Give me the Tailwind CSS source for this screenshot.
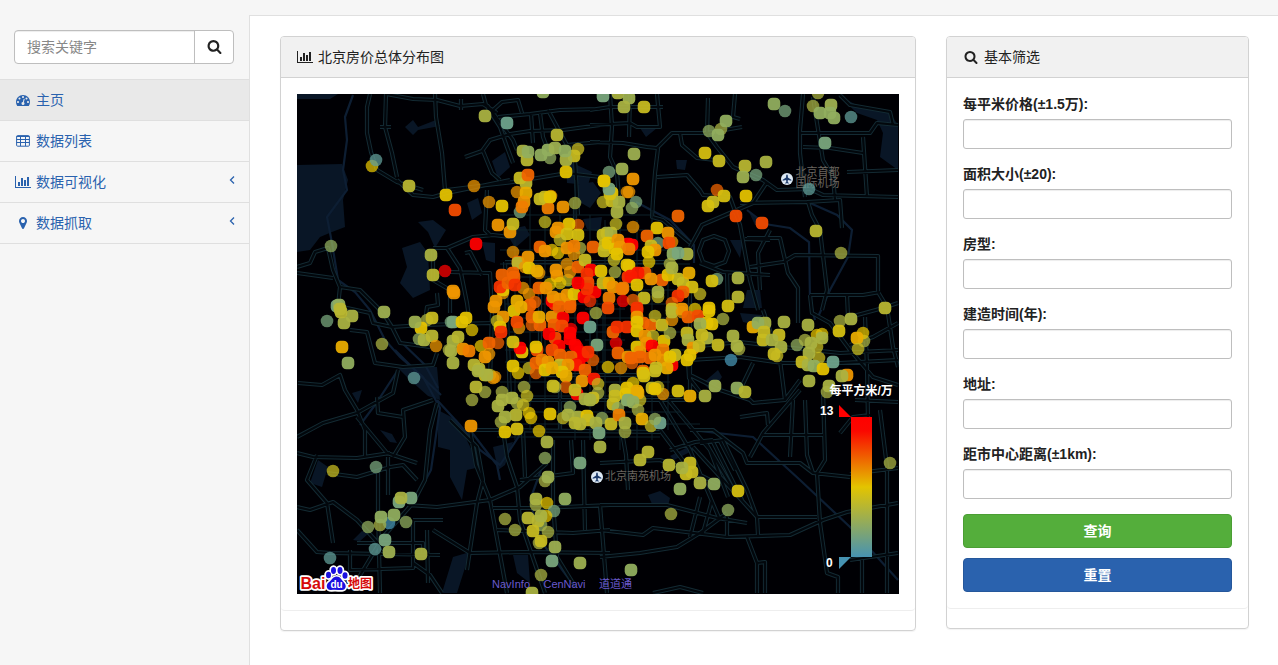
<!DOCTYPE html>
<html lang="zh-CN">
<head>
<meta charset="utf-8">
<title>北京房价总体分布图</title>
<script src="https://cdn.jsdelivr.net/npm/@tailwindcss/browser@4"></script>
</head>
<body class="bg-[#f6f6f6] text-[#222] text-sm leading-5 font-['Liberation_Sans','Noto_Sans_CJK_SC',sans-serif] h-[665px] overflow-hidden flex flex-col">
<svg class="hidden">
  <symbol id="search" viewBox="0 0 1792 1792"><path d="M1216 832q0-185-131.5-316.5t-316.5-131.5-316.5 131.5-131.5 316.5 131.5 316.5 316.5 131.5 316.5-131.5 131.5-316.5zm512 832q0 52-38 90t-90 38q-54 0-90-38l-343-342q-179 124-399 124-143 0-273.5-55.5t-225-150-150-225-55.5-273.5 55.5-273.5 150-225 225-150 273.5-55.5 273.5 55.5 225 150 150 225 55.5 273.5q0 220-124 399l343 343q37 37 37 90z"/></symbol>
  <symbol id="bars" viewBox="0 0 2048 1792"><path d="M640 896v512h-256v-512h256zm384-512v1024h-256v-1024h256zm1024 1152v128h-2048v-1536h128v1408h1920zm-640-896v768h-256v-768h256zm384-384v1152h-256v-1152h256z"/></symbol>
</svg>
<div class="h-[15px] shrink-0"></div>
<div class="flex flex-1 min-h-0">
  <aside class="w-[249px] shrink-0">
    <div class="pl-[14px] pr-[15px] pt-[15px] pb-[15px]">
      <div class="flex h-[34px] rounded border border-[#bebebe] bg-white overflow-hidden">
        <div class="flex-1 px-3 flex items-center text-[#888] shadow-[inset_0_1px_1px_rgba(0,0,0,0.075)]">搜索关键字</div>
        <div class="w-[39px] border-l border-[#bebebe] flex items-center justify-center pb-0.5"><svg class="size-[15px] fill-[#222]"><use href="#search"/></svg></div>
      </div>
    </div>
    <nav class="text-[#2a62ae]">
      <a class="flex items-center h-[41px] gap-1 pl-[14px] bg-[#e9e9e9] border-t border-[#dfdfdf]">
        <span class="w-[18px] flex justify-center"><svg class="size-[14px] fill-current" viewBox="0 0 1792 1792"><path d="M384 1152q0-53-37.500-90.500t-90.500-37.500-90.500 37.500-37.500 90.500 37.500 90.500 90.500 37.500 90.500-37.500 37.500-90.500zm192-448q0-53-37.500-90.500t-90.500-37.500-90.500 37.500-37.500 90.500 37.500 90.500 90.500 37.500 90.500-37.500 37.500-90.500zm428 481l101-382q6-26-7.500-48.500t-38.500-29.500-48 6.500-30 39.500l-101 382q-60 5-107 43.500t-63 98.500q-20 77 20 146t117 89 146-20 89-117q16-60-6-117t-72-91zm660-33q0-53-37.500-90.500t-90.500-37.500-90.500 37.500-37.500 90.500 37.500 90.500 90.500 37.500 90.500-37.500 37.500-90.500zm-640-640q0-53-37.500-90.500t-90.500-37.500-90.500 37.500-37.500 90.500 37.500 90.500 90.500 37.500 90.500-37.500 37.500-90.500zm448 192q0-53-37.500-90.500t-90.500-37.500-90.500 37.500-37.500 90.500 37.500 90.500 90.500 37.500 90.500-37.500 37.500-90.500zm320 448q0 261-141 483-19 29-54 29h-1402q-35 0-54-29-141-221-141-483 0-182 71-348t191-286 286-191 348-71 348 71 286 191 191 286 71 348z"/></svg></span>
        <span>主页</span>
      </a>
      <a class="flex items-center h-[41px] gap-1 pl-[14px] border-t border-[#dfdfdf]">
        <span class="w-[18px] flex justify-center"><svg class="w-[14px] h-[12px] fill-none stroke-current" viewBox="0 0 14 12"><rect x=".6" y=".6" width="12.800" height="10.600" rx="1"/><path d="M.5 1.500h13M.5 4.500h13M.5 7.500h13M4.500 1v10M9.500 1v10"/></svg></span>
        <span>数据列表</span>
      </a>
      <a class="flex items-center h-[41px] gap-1 pl-[14px] pr-[14px] border-t border-[#dfdfdf]">
        <span class="w-[18px] flex justify-center"><svg class="w-4 h-[14px] fill-current"><use href="#bars"/></svg></span>
        <span>数据可视化</span>
        <svg class="ml-auto mb-1 w-[6px] h-2 fill-none stroke-current stroke-[1.3]" viewBox="0 0 6 8"><path d="M5 .5 1.500 4 5 7.500"/></svg>
      </a>
      <a class="flex items-center h-[42px] gap-1 pl-[14px] pr-[14px] border-y border-[#dfdfdf]">
        <span class="w-[18px] flex justify-center"><svg class="w-2 h-[14px] fill-current" viewBox="0 0 1024 1792"><path d="M768 640q0-106-75-181t-181-75-181 75-75 181 75 181 181 75 181-75 75-181zm256 0q0 109-33 179l-364 774q-16 33-47.500 52t-67.500 19-67.500-19-46.500-52l-365-774q-33-70-33-179 0-212 150-362t362-150 362 150 150 362z"/></svg></span>
        <span>数据抓取</span>
        <svg class="ml-auto mb-1 w-[6px] h-2 fill-none stroke-current stroke-[1.3]" viewBox="0 0 6 8"><path d="M5 .5 1.500 4 5 7.500"/></svg>
      </a>
    </nav>
  </aside>
  <main class="flex-1 bg-white border-l border-t border-[#e0e0e0] pl-[30px] pt-5 flex items-start gap-[30px]">
    <section class="w-[636px] h-[595px] rounded border border-[#d2d2d2] shadow-[0_1px_1px_rgba(0,0,0,0.05)]">
      <div class="h-[41px] flex items-center gap-1 pl-[15px] bg-[#f1f1f1] border-b border-[#d2d2d2] rounded-t-[3px]">
        <span class="w-[18px] flex justify-center"><svg class="w-4 h-[14px] fill-[#222]"><use href="#bars"/></svg></span>
        <span>北京房价总体分布图</span>
      </div>
      <div class="h-[533px] px-4 pt-4 border-b border-[#eee] rounded-b">
        <svg class="block w-[602px] h-[500px] bg-[#000004]" viewBox="297 94 602 500">
          <defs>
            <linearGradient id="scale" x1="0" y1="0" x2="0" y2="1"><stop offset="0" stop-color="#ff0000"/><stop offset=".1" stop-color="#fa0800"/><stop offset=".5" stop-color="#e3c400"/><stop offset="1" stop-color="#4693b2"/></linearGradient>
            <symbol id="plane" viewBox="-7 -7 14 14"><circle r="6" fill="#dce8f4"/><path d="M0-4.500c.8 0 .9 1 .9 3L4.300.8v1L.9.9.7 3l1.200 1v.6L0 4.200l-1.900.4V4l1.200-1L-.9.9l-3.400.9v-1L-.9-1.500c0-2 .1-3 .9-3z" fill="#1d3a6b"/></symbol>
          </defs>
          <g fill="#091626">
            <path d="M297 165 342 164 348 180 343 200 345 227 332 232 320 237 310 250 297 252ZM297 94 338 94 330 99 297 99ZM405 127 413 120 418 127 436 120 440 126 418 130 413 135ZM418 222 433 220 446 230 435 248 428 232ZM402 248 420 242 428 253 430 290 413 298 400 283 407 267ZM397 367 437 367 440 400 428 396 410 380ZM467 203 478 198 482 213 472 220ZM482 242 495 243 495 263 486 260ZM838 95 857 113 877 120 883 133 880 157 898 170 898 125 890 113 862 108ZM640 128 657 128 646 137ZM676 160 687 160 685 170 677 169ZM730 240 743 240 740 258ZM747 290 760 290 762 308 743 308ZM748 210 768 227 755 225ZM438 410 457 420 480 467 467 470 462 500 450 477 450 450 438 447ZM453 557 470 552 457 593 442 593ZM318 460 328 467 322 487 310 483ZM352 393 362 390 358 403ZM380 430 392 434 397 443 390 442ZM353 540 362 531 368 534 360 541ZM513 555 528 555 530 583 517 573ZM493 447 513 442 505 465 498 470ZM574 185 593 182 601 193 590 208 576 200ZM583 219 602 217 600 232 587 229ZM505 230 525 226 530 235 515 248ZM648 495 660 491 670 498 668 506 652 504ZM670 456 690 446 694 450 674 460ZM703 383 718 370 722 377 712 392ZM492 161 505 152 510 167 498 178ZM566 160 592 172 588 185 567 183ZM740 313 762 315 760 326 743 322Z"/>
          </g>
          <g fill="none" stroke="#0d1e33" stroke-width="2.200">
            <path d="M353 95 345 117 347 140 343 170 347 190 327 217 332 243 338 280 355 292 370 310 385 340 400 357 423 377 440 408 431 470 413 503 383 537 353 587M810 203 837 215 852 230 848 257 830 290 818 317M747 210 765 224 790 228 809 242 810 300 815 320M690 430 753 437 800 480 850 527 898 580M636 202 670 220 694 245 694 263M398 370 375 405 360 425M437 400 460 425 480 450 500 465 523 430M541 470 530 500 540 540 575 587M395 350 420 375 441 395M399 340 425 365 438 388M470 430 483 447 497 465 500 480"/>
          </g>
          <g id="roads" fill="none"></g>
          <g fill="none" stroke="#0d2029" stroke-width="1">
            <path d="M505 290H700M505 304H700M505 318H700M510 332H690M505 350H690M505 362H680M500 382H670M500 396H690M500 412H680M495 424H700M497 437H660M515 240V440M530 180V430M545 200V440M560 215V430M575 180V440M590 215V440M605 220V440M620 210V450M637 220V450M652 210V440M668 240V430M500 250H680M500 264H690M500 277H690M500 215H650M500 230H660M590 300V370M597 300V370M603 300V370M585 309H625M585 325H625M585 340H625"/>
          </g>
          <g font-size="11" fill="#6a655f" font-family="'Liberation Sans','Noto Sans CJK SC',sans-serif">
            <text x="795.500" y="176">北京首都</text><text x="795.500" y="187">国际机场</text><text x="605" y="480">北京南苑机场</text>
          </g>
          <use href="#plane" x="780" y="172" width="14" height="14"/><use href="#plane" x="590" y="470" width="14" height="14"/>
          <g font-size="11" fill="#6a5acd" font-family="'Liberation Sans','Noto Sans CJK SC',sans-serif">
            <text x="492" y="588" textLength="38">NavInfo</text><text x="543.500" y="588" textLength="42">CenNavi</text><text x="599" y="588">道道通</text>
          </g>
          <g id="points"></g>
          <g font-family="'Liberation Sans','Noto Sans CJK SC',sans-serif" font-weight="bold" paint-order="stroke" stroke-linejoin="round">
            <g fill="#fff" stroke="#fff" stroke-width="4"><ellipse cx="328.500" cy="575" rx="2.300" ry="3"/><ellipse cx="333.500" cy="570.500" rx="2.300" ry="3.200"/><ellipse cx="340" cy="570.500" rx="2.300" ry="3.200"/><ellipse cx="345" cy="575.500" rx="2.300" ry="3"/><path d="M336.500 577c4 0 4.500 3.500 7 5.500 3 3 2 7-1.500 7.300-4 0-7-.6-10.500 0-4.500.2-5.500-4.500-2.500-7.300 3-2 4-5.500 7.500-5.500z"/></g>
            <text x="300.500" y="588.500" font-size="16" fill="#d60a0a" stroke="#fff" stroke-width="3.500" textLength="25" lengthAdjust="spacingAndGlyphs">Bai</text>
            <text x="348" y="588" font-size="12" fill="#d60a0a" stroke="#fff" stroke-width="3.500">地图</text>
            <g fill="#1a10e0"><ellipse cx="328.500" cy="575" rx="2.500" ry="3.300"/><ellipse cx="333.500" cy="570.500" rx="2.500" ry="3.400"/><ellipse cx="340" cy="570.500" rx="2.500" ry="3.400"/><ellipse cx="345" cy="575.500" rx="2.500" ry="3.300"/><path d="M336.500 576.500c4 0 5 3.500 7.500 6 3 3 2 7.300-2 7.500-4 0-7-.8-11 0-4.500.3-5.500-4.700-2.500-7.500 3-2 4.500-6 8-6z"/></g>
            <text x="330.500" y="588" font-size="10" fill="#fff">du</text>
            <g font-size="12" fill="#fff"><text x="829.500" y="394.500">每平方米/万</text><text x="820" y="415">13</text><text x="826" y="567">0</text></g>
          </g>
          <path d="M839 405 851 417H839Z" fill="#ff0000"/><rect x="851" y="417" width="21" height="140" fill="url(#scale)"/><path d="M839 557H851L839 569Z" fill="#4693b2"/>
        </svg>
      </div>
    </section>
    <section class="w-[303px] h-[593px] rounded border border-[#d2d2d2] shadow-[0_1px_1px_rgba(0,0,0,0.05)]">
      <div class="h-[41px] flex items-center gap-1 pl-[15px] bg-[#f1f1f1] border-b border-[#d2d2d2] rounded-t-[3px]">
        <span class="w-[18px] flex justify-center"><svg class="size-[14px] fill-[#222]"><use href="#search"/></svg></span>
        <span>基本筛选</span>
      </div>
      <form class="h-[531px] px-4 pt-4 border-b border-[#eee] rounded-b flex flex-col">
        <label class="block h-[70px] font-bold">每平米价格(±1.5万):<input class="block mt-[5px] w-full h-[30px] rounded-[3px] border border-[#bebebe] shadow-[inset_0_1px_1px_rgba(0,0,0,0.075)]"></label>
        <label class="block h-[70px] font-bold">面积大小(±20):<input class="block mt-[5px] w-full h-[30px] rounded-[3px] border border-[#bebebe] shadow-[inset_0_1px_1px_rgba(0,0,0,0.075)]"></label>
        <label class="block h-[70px] font-bold">房型:<input class="block mt-[5px] w-full h-[30px] rounded-[3px] border border-[#bebebe] shadow-[inset_0_1px_1px_rgba(0,0,0,0.075)]"></label>
        <label class="block h-[70px] font-bold">建造时间(年):<input class="block mt-[5px] w-full h-[30px] rounded-[3px] border border-[#bebebe] shadow-[inset_0_1px_1px_rgba(0,0,0,0.075)]"></label>
        <label class="block h-[70px] font-bold">地址:<input class="block mt-[5px] w-full h-[30px] rounded-[3px] border border-[#bebebe] shadow-[inset_0_1px_1px_rgba(0,0,0,0.075)]"></label>
        <label class="block h-[70px] font-bold">距市中心距离(±1km):<input class="block mt-[5px] w-full h-[30px] rounded-[3px] border border-[#bebebe] shadow-[inset_0_1px_1px_rgba(0,0,0,0.075)]"></label>
        <button type="button" class="h-[34px] rounded bg-[#54ae3b] border border-[#4b9e34] text-white font-bold">查询</button>
        <button type="button" class="mt-2.5 h-[34px] rounded bg-[#2a62ae] border border-[#25579b] text-white font-bold">重置</button>
      </form>
    </section>
  </main>
</div>
<script>
const NS = 'http://www.w3.org/2000/svg';
// Road centre lines, one polyline per line
const roads = `370,94 367,107 367,133 371,152 377,170 397,182 423,190
386,94 385,127 392,153 397,177
386,94 413,99 437,100 460,106 483,104 497,113
380,127 391,127
461,99 461,110
435,94 436,117 442,153 445,190
483,94 486,105 500,127 507,147 513,163
487,105 513,140 517,150
493,110 502,102 518,100 522,113
498,117 530,114 560,110 600,109
465,157 482,151 490,140 510,134 530,131 563,130 600,125
483,151 492,173 500,180
540,113 543,137 548,150
531,114 533,143
447,190 487,185 513,182 567,173 600,177
567,145 600,142
590,110 610,107 663,107
610,94 612,127 610,157 617,173 620,210
590,125 630,123 637,127 660,127 657,94
590,142 623,143 647,147 657,148 672,133 707,133 742,127
658,148 655,173 653,200 652,217 663,220 690,243
657,177 687,175 700,190 703,195 730,197 740,225 750,280 758,310
630,94 629,137
708,98 707,133 717,147 733,167 763,180 777,190 810,189 823,195 898,197
680,133 682,145 697,158 715,160
803,94 800,130 800,153 805,197
813,97 817,123 823,160 833,177 835,200
800,133 870,133 877,123 898,125
840,95 850,105 890,112 893,125
803,147 830,148 863,153
863,137 867,197
847,172 898,170
735,94 733,117 740,119
767,182 753,203 702,225 690,247
297,267 310,263 315,252 328,248 333,270 340,287 360,290 383,313 392,327 400,343 430,347
297,273 333,278
340,287 338,306 370,313 373,323 392,327 423,325 490,323
350,330 367,332 375,363 403,367 433,365 437,353
397,180 413,195 433,197 447,193 510,180
433,248 447,248 473,237 493,235 510,237
447,248 460,268 467,303 470,325
450,272 490,273 492,313 490,380
465,253 470,252 482,275
433,250 433,280 450,290 450,313
437,293 438,305 427,307 425,323
487,190 485,230 491,236
745,239 770,240
700,263 723,272 770,275
770,230 758,253 760,290
727,273 728,310
740,203 807,202 840,200 842,228
808,202 812,215 820,230 827,290 822,310
747,238 780,238 788,273 798,288 798,323
750,267 783,262 795,255 878,256 878,292 887,307 893,347 898,367
810,295 863,295 880,292
810,295 812,313 830,323 850,350 873,377 898,385
898,303 883,308 850,317
690,347 740,342 783,347 840,353 898,350
690,360 740,357 783,363 840,363 898,360
847,295 848,317
763,310 780,360 785,400
753,363 740,390 753,403 785,400 800,380
740,417 767,413 768,425
865,317 867,367 868,420
898,323 873,337 850,345
298,383 322,385 340,375 345,390 357,410 365,430 365,457
297,437 323,423 357,413 393,393 398,370
357,417 387,453 417,463
377,397 378,413 403,417
433,400 403,410 405,437 393,457
297,453 313,457 357,458 390,453
317,455 307,480 327,503 333,543
327,473 357,477 390,467 403,465 417,480
297,507 310,510 333,502 357,520 387,553
378,470 378,510 380,593
388,457 388,495
407,505 437,507 490,500 520,487 547,463
437,403 430,430 425,480 413,503 383,537 353,587
297,530 317,552 330,553 440,555
413,520 443,520
357,543 423,543 423,553
350,550 350,570 413,568 413,520
427,530 428,583
413,563 430,575 442,593
433,530 470,553 523,552 610,553
450,420 477,447 483,480 477,503 467,570
470,430 476,465 490,500 507,593
470,430 523,430
503,430 507,457 517,487 520,520 545,593
523,430 525,477
493,508 540,508 610,505
497,530 573,533 610,530
553,440 553,503 557,557 573,583
583,440 585,530
520,480 573,473 571,440
660,390 710,450 728,497
800,390 763,433 750,457
690,430 713,430 743,453 747,463 800,463 813,473 850,477
763,435 823,435
823,390 825,460 817,473 820,523 827,573 838,577 838,593
693,447 757,517 758,535
700,443 723,440 747,490 757,517
706,443 733,489
713,442 742,500
720,441 735,470
670,450 695,442 713,440
793,400 790,457
805,400 807,455 813,473
600,505 667,505 717,518 747,523
757,517 817,517
600,530 643,535 653,528 727,537 790,535 823,520 847,512 898,503
600,557 640,553 677,547 700,533 727,513
600,505 607,593
700,497 690,537
712,500 703,533
747,537 757,563 757,593
757,563 765,562 765,593
653,593 680,587 703,593
850,560 898,553
862,560 862,593
887,593 887,467 880,410
850,474 898,468
840,433 853,417 870,415
727,517 727,537
660,430 690,470 720,485
620,420 626,455 628,490
600,463 660,460 690,470
660,400 690,450 720,520
690,375 720,390 750,400
688,360 689,378 700,392
540,285 640,285 641,375 540,375 540,285
505,262 665,262 690,290 690,400 510,400 505,262
500,430 660,432
560,385 560,430
575,200 575,262
548,110 575,160 578,215
855,400 898,402`.split('\n').map(l => 'M' + l).join('') + 'M699 251L703 240 714 236 725 240 729 251 725 262 714 266 703 262Z';
for (const [color, width] of [['#132a33', 4.2], ['#02070c', 2.2]]) {
  const p = document.createElementNS(NS, 'path');
  p.setAttribute('d', roads); p.setAttribute('stroke', color); p.setAttribute('stroke-width', width); p.setAttribute('stroke-linejoin', 'round');
  document.getElementById('roads').append(p);
}
// x,y,level (0–10); a trailing d marks a faded point
const data = `485,116,4 507,123,1.5 557,135,4.5 550,158,3d 523,151,4 527,160,4.5 528,152,3 541,155,3 548,150,3 578,149,5d 574,156,5 566,160,4 555,148,3.5 565,151,3 566,172,6 526,183,4.5 520,178,5 528,175,8 372,166,6d 376,160,1d 409,186,4.5 446,195,6 474,186,7d 603,96,2 543,92,3
618,93,4 629,98,3.5 624,107,4 644,107,5 709,131,3d 721,129,4d 726,121,3 718,135,3 705,153,5.5 719,161,5 745,166,4.5 766,162,4 743,177,3.5 756,175,2d 634,154,3.5 609,172,2d 622,169,3.5 633,179,7 629,192,7d 612,193,6 604,181,6 717,190,8d 724,196,5.5 746,196,6 774,104,3 785,111,2d 818,93,4d 813,106,4d 831,105,3.5 820,113,3 830,113,3 834,118,3 851,117,1d 825,143,2 809,189,1d
455,210,8.5 489,202,7d 502,206,6 498,225,7 476,244,10 445,271,10d 431,255,4 433,275,4.5 331,246,3d 454,293,7 453,291,7 427,320,4d 432,318,5 421,328,6 415,322,3.5 419,339,3d 424,340,4 432,336,4.5 436,346,7d 451,322,2d 453,322,2 462,322,6 466,318,6 472,330,6d 453,341,4 458,337,4.5 451,351,4 449,350,4d 463,349,7 469,351,7.5 453,363,4 495,377,7d 490,375,5d 474,365,4.5 479,369,4.5 485,375,5 337,306,2 339,305,3 352,316,4 344,323,4 341,312,4.5 340,309,4.5 327,321,2d 384,312,3.5 382,344,4d 342,347,6.5 348,363,3 414,378,1d
520,212,2d 517,192,7d 526,193,6.5 524,202,7 522,207,7.5 548,208,7.5 551,196,7d 540,199,5 545,197,5 550,197,6 563,207,7 575,203,4d 510,232,7 513,224,5 545,222,5d 578,225,8d 569,224,6 558,228,7 556,232,7 567,234,5.5 560,240,5d 580,248,4d 578,235,5.5 540,247,8 552,250,6d 545,251,7 558,253,6d 567,248,7 574,254,7d 574,246,7.5 593,247,8 513,252,7d 518,262,8 518,263,4.5 525,267,7d 528,257,7 529,268,6 539,273,7d 537,271,6.5 567,264,7d 568,280,5d 570,272,7d 556,270,7 557,276,7 578,267,8 585,260,5 591,270,10 587,274,9 502,275,8 529,294,7d 503,293,7d 503,290,6 500,287,9 508,283,8 513,273,8 514,277,8 523,288,7d 515,285,9 535,302,8d 530,305,8 496,301,7 494,307,7 514,311,6 517,301,6.5 521,307,6.5 539,288,8 550,284,6d 560,283,6d 546,288,7 555,304,9 552,301,10 570,304,8 553,297,7 560,299,7 567,295,7 574,294,6 595,292,10 584,297,10 590,301,9d 588,283,8.5 587,289,9 578,283,10 601,271,6 615,272,4d 614,260,5d 603,283,5 609,283,6.5 613,287,7 622,289,7.5 609,298,7.5 623,301,10d 608,308,8.5 627,265,6 628,277,9 628,244,10 605,245,5 604,251,5 607,233,4 603,235,5 611,233,4 608,243,6 618,240,7 615,249,6 620,247,7 617,254,6 616,224,5d 603,202,5d 612,201,5 619,202,4 617,212,4 610,194,5.5 609,189,2 604,181,6 627,192,7d
636,202,2d 632,208,3d 633,227,7d 657,228,6 668,233,7 647,236,8 632,245,10 629,249,7.5 678,216,8 713,202,5 708,206,5.5 736,216,8.5 762,223,8.5 649,262,6d 658,243,2d 651,246,5 655,250,7 648,252,6 672,242,7d 669,243,8.5 673,254,3 687,254,4 678,253,2 670,264,4d 629,266,6 645,273,8 638,273,9.5 631,276,9.5 662,280,8 651,279,7 637,285,6 678,279,5 683,283,5 668,275,6 672,268,4 689,273,6.5 658,297,5d 658,292,4 700,294,5d 692,287,5.5 683,292,8 678,296,9 644,298,5 623,288,7.5 633,300,8d 637,308,9 672,303,8d 672,309,5 682,309,7 695,309,6d 709,308,6 717,279,2d 712,281,5.5 738,278,4 738,297,4.5 728,306,5.5
503,317,7 497,321,5d 500,327,6 498,343,8d 501,332,9 519,328,7d 517,322,8.5 532,325,8d 532,317,8 540,325,8 539,317,6.5 552,317,7 559,307,8 563,318,10 570,307,8 571,329,10d 554,325,8 562,326,8.5 555,338,8.5 549,334,10 577,347,10d 570,333,10 570,339,10 575,345,10 580,352,10 559,346,10 583,318,10 590,327,1.5 596,313,4d 597,345,2 593,360,8d 583,356,10 588,352,9 481,346,6d 489,343,8 489,354,7d 485,357,7 522,352,6 520,348,10 513,342,5.5 537,350,8.5 536,347,6 513,366,6 518,373,6d 529,368,5d 536,373,8d 536,363,8 542,360,7.5 552,350,8.5 560,355,8 548,362,7 571,357,8 579,364,10 576,365,9.5 585,370,8 545,370,6 560,365,5 568,365,7 562,372,6 552,368,6.5 566,376,6.5 582,381,7 594,379,9.5 566,387,8d 555,387,4d 553,386,5 598,384,5d 577,394,10 575,390,5 598,393,4d 593,398,5 590,400,4 585,399,4 608,367,6d 621,368,7d 616,343,10d 613,332,8 627,327,9 617,327,9 618,353,8 628,357,7 493,378,7d 487,375,4 478,371,4 485,392,4d 476,387,4.5 472,400,4d 502,392,4d 502,400,4 498,406,4 524,387,4d 527,396,5d 517,403,4d 523,405,5d 512,398,4 501,422,4d 516,415,4.5 505,417,4 531,418,6d 529,413,6d 550,414,6 505,432,6 517,429,5.5 539,431,6d 547,442,4 563,418,5d 570,407,3d 568,415,4 578,417,4 587,416,6 588,420,5 580,424,4.5 575,423,4.5 602,418,3d 596,423,4 611,424,5 599,433,2 615,390,4 615,396,5 613,404,5 627,400,3 618,408,3d 619,415,7.5 625,432,4d 625,423,4
637,310,9 643,323,8 637,317,7 651,325,8 637,322,6 637,331,6 655,316,5d 662,325,5 645,336,7 653,336,5d 637,347,6 647,343,7 640,352,7 664,341,6 652,346,10 670,333,4d 672,320,7d 672,312,4.5 682,312,7d 688,317,8 698,316,8.5 709,311,6 707,323,6 712,324,6 700,324,3.5 723,319,4d 687,333,5 688,340,4 707,338,4 702,335,5 693,348,7 699,346,5 718,345,5 733,336,4 739,349,4d 737,346,4 731,360,0d 663,350,7.5 663,360,7 672,365,10 650,358,8 640,357,8 655,355,7 632,363,8d 631,358,8 675,355,5 670,357,6 690,355,6 687,360,6 667,368,6.5 656,368,5 655,371,5 643,371,8 643,373,6 644,376,5.5 633,383,6d 627,388,6 626,394,6 637,391,6.5 663,394,7d 658,387,5d 652,388,5 655,389,6 640,400,5d 638,393,6.5 628,400,2.5 633,402,3 638,410,4d 642,419,6.5 651,426,5d 660,423,1.5 655,419,3d 678,391,5.5 690,396,6.5 705,396,4 715,386,3.5 737,388,3 745,392,4.5 753,327,6.5
816,231,4.5 841,253,4d 885,308,4.5 765,323,4 758,323,3 764,332,5 763,340,5 784,322,4 779,335,5 772,340,4 781,347,4 777,356,5d 774,354,5 808,325,4 797,345,3d 805,340,4d 817,335,6d 822,334,6d 817,347,5d 822,338,4 811,343,4 819,358,5d 809,353,4 802,362,5 808,365,4 814,366,3 823,369,6 833,362,1.5 809,381,4 840,321,4d 851,319,4 839,331,5.5 864,341,4d 863,333,6d 857,338,6.5 858,349,5d 847,375,7 842,376,4 827,392,4d 829,386,4
471,426,7 333,471,5d 376,467,2d 399,502,2 411,498,2 401,498,4 389,523,0d 380,525,4d 381,517,3 394,515,3 368,527,3d 406,522,3d 375,549,1d 385,540,2 389,552,3.5 421,554,4 330,558,1d 545,458,3d 545,481,4d 548,477,3.5 580,463,2 600,447,4 565,499,3 536,505,4d 536,499,4 547,503,6d 554,511,2d 528,518,4.5 546,516,6d 541,525,3d 538,521,4.5 541,516,4 505,519,4d 515,530,4d 533,531,5 548,532,4d 539,543,4d 541,541,5 555,547,3.5 552,561,2 580,563,3.5 541,575,4d 532,593,4
648,452,4.5 640,460,4.5 669,465,4.5 690,463,5 692,472,5 686,474,5 682,468,4 700,483,4 714,484,3 680,489,3 738,491,5.5 728,510,3d 671,514,4d 631,570,3 890,463,4d`.split(/\s+/);
const stops = [[0,70,147,178],[1.5,110,164,140],[3,146,174,95],[4,170,178,66],[5,200,187,32],[6,228,194,0],[7,238,150,0],[8,240,100,0],[9,245,50,0],[10,255,0,0]];
function tint(v) {
  let i = 1;
  while (stops[i][0] < v) i++;
  const a = stops[i - 1], b = stops[i], t = (v - a[0]) / (b[0] - a[0]);
  return `rgb(${[1, 2, 3].map(k => Math.round(a[k] + (b[k] - a[k]) * t))})`;
}
const layer = document.getElementById('points');
for (const entry of data) {
  const [x, y, v] = entry.split(',').map(parseFloat), faded = entry.endsWith('d');
  const r = document.createElementNS(NS, 'rect'), s = 12.6;
  const attrs = { x: x - s / 2, y: y - s / 2, width: s, height: s, rx: faded ? 6.3 : 4.8, fill: tint(v), opacity: faded ? 0.74 : 0.94 };
  for (const k in attrs) r.setAttribute(k, attrs[k]);
  layer.append(r);
}
</script>
</body>
</html>
